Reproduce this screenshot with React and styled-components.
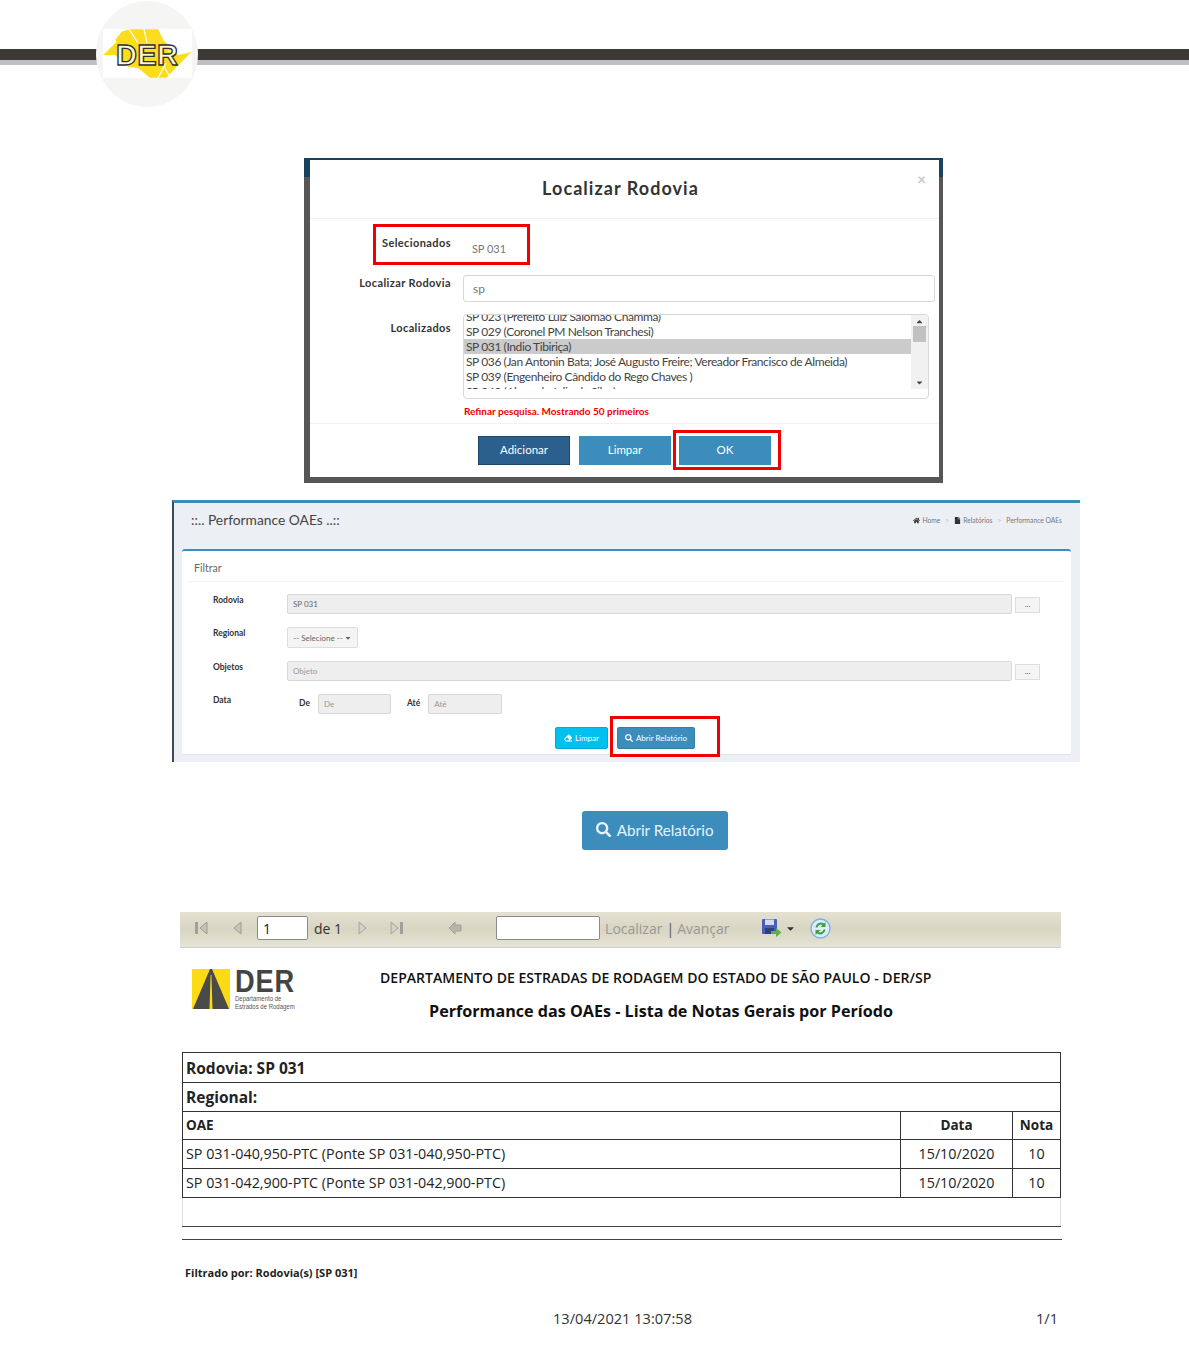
import React from "react";
import styled, { createGlobalStyle } from "styled-components";
import { FaHome, FaFile, FaEraser, FaSearch, FaCaretDown, FaCaretUp } from "react-icons/fa";

const Global = createGlobalStyle`
    html, body { margin: 0; padding: 0; background: #fff; }
    body { font-family: "Lato", "Liberation Sans", sans-serif; }
    * { box-sizing: border-box; }
`;

const Page = styled.div`
    width: 1189px;
    height: 1354px;
    overflow: hidden;
    display: flex;
    flex-direction: column;
    align-items: flex-start;
`;

/* top banner */
const Banner = styled.div`
    position: relative;
    width: 100%;
    height: 108px;
    padding-top: 49px;
    flex: none;
`;
const BarDark = styled.div`
    height: 11px;
    background: #3d3a36;
`;
const BarGrey = styled.div`
    height: 5px;
    background: #bfc0c2;
`;
const Seal = styled.svg`
    position: absolute;
    left: 96px;
    top: 1px;
`;

/* modal */
const ModalFrame = styled.div`
    margin: 50px 0 0 304px;
    width: 639px;
    height: 325px;
    padding: 2px 4px 6px 6px;
    flex: none;
    background: linear-gradient(#17435e 0, #17435e 19px, #565656 19px, #565656 100%);
`;
const Modal = styled.div`
    position: relative;
    height: 100%;
    background: #fff;
`;
const ModalHeader = styled.div`
    height: 59px;
    border-bottom: 1px solid #f2f2f2;
    display: flex;
    align-items: center;
    justify-content: center;
    padding: 0 8px 3px 0;
    font-size: 18px;
    font-weight: 700;
    letter-spacing: 1.05px;
    color: #333;
`;
const Close = styled.span`
    position: absolute;
    top: 10px;
    right: 13px;
    font-size: 15px;
    font-weight: 700;
    color: #c8c8c8;
`;
const RedBox = styled.div`
    border: 3px solid #f00000;
    flex: none;
`;
const SelectedBox = styled(RedBox)`
    margin: 5px 0 0 63px;
    width: 157px;
    height: 41px;
    display: flex;
    padding: 9px 0 0 6px;
`;
const SelLabel = styled.span`
    font-size: 11px;
    font-weight: 700;
    line-height: 14px;
    letter-spacing: 0.4px;
    color: #333;
`;
const SelValue = styled.span`
    margin: 6px 0 0 21px;
    font-size: 11px;
    line-height: 14px;
    color: #777;
`;
const ModalRow = styled.div`
    display: flex;
    margin-top: ${(p) => p.$top}px;
`;
const ModalLabel = styled.div`
    width: 141px;
    padding-top: ${(p) => p.$pad || 0}px;
    text-align: right;
    font-size: 11px;
    font-weight: 700;
    line-height: 14px;
    letter-spacing: 0.4px;
    color: #333;
`;
const SearchBox = styled.div`
    margin-left: 12px;
    width: 472px;
    height: 27px;
    border: 1px solid #d8d8d8;
    border-radius: 3px;
    padding: 0 9px;
    font-size: 12px;
    line-height: 26px;
    color: #777;
`;
const ListBox = styled.div`
    margin-left: 12px;
    width: 466px;
    height: 85px;
    border: 1px solid #d8d8d8;
    border-radius: 4px;
    display: flex;
    overflow: hidden;
`;
const ListItems = styled.div`
    flex: 1;
    height: 74px;
    overflow: hidden;
`;
const ListInner = styled.div`
    margin-top: -6px;
`;
const ListItem = styled.div`
    height: 15px;
    padding-left: 2px;
    font-size: 12px;
    line-height: 15px;
    white-space: nowrap;
    letter-spacing: -0.4px;
    color: #444;
    background: ${(p) => (p.$on ? "#cbcbcb" : "transparent")};
`;
const ScrollTrack = styled.div`
    width: 17px;
    height: 74px;
    background: #f1f1f1;
    display: flex;
    flex-direction: column;
    align-items: center;
    justify-content: space-between;
    font-size: 9px;
    color: #444;
    padding: 2px 0;
`;
const ScrollThumb = styled.div`
    width: 13px;
    height: 16px;
    margin-bottom: 36px;
    background: #c1c1c1;
`;
const Warn = styled.div`
    margin: 6px 0 0 154px;
    height: 12px;
    font-size: 10px;
    font-weight: 700;
    line-height: 12px;
    color: #f00000;
`;
const ModalFooter = styled.div`
    margin-top: 6px;
    border-top: 1px solid #f2f2f2;
    display: flex;
    align-items: flex-start;
    padding: 6px 0 0 168px;
`;
const ModalButton = styled.div`
    width: 92px;
    height: 29px;
    margin-top: 6px;
    margin-right: ${(p) => p.$gap || 0}px;
    background: ${(p) => p.$bg || "#3c8dbc"};
    border: 1px solid ${(p) => p.$line || "#3c8dbc"};
    color: #fff;
    font-size: 11.5px;
    line-height: 26px;
    text-align: center;
`;
const OkBox = styled(RedBox)`
    width: 108px;
    height: 40px;
    padding: 3px 0 0 3px;
`;
const OkButton = styled(ModalButton)`
    margin-top: 0;
`;

/* filter panel */
const Panel = styled.div`
    margin: 17px 0 0 172px;
    width: 908px;
    height: 262px;
    flex: none;
    background: #ecf0f5;
    border-top: 3px solid #3c8dbc;
    border-left: 2px solid #3b4a55;
    padding: 0 9px 0 8px;
`;
const PanelTop = styled.div`
    height: 46px;
    display: flex;
    justify-content: space-between;
    padding: 9px 9px 0 9px;
`;
const PanelTitle = styled.div`
    font-size: 13.8px;
    line-height: 16px;
    color: #444;
`;
const Crumbs = styled.div`
    display: flex;
    align-items: center;
    height: 16px;
    font-size: 6.7px;
    color: #777;
`;
const CrumbIcon = styled.span`
    display: inline-flex;
    margin-right: 2px;
    font-size: 7px;
    color: #333;
`;
const CrumbSep = styled.span`
    margin: 0 5px;
    color: #bbb;
`;
const Card = styled.div`
    height: 206px;
    background: #fff;
    border-top: 2px solid #3c8dbc;
    border-bottom: 1px solid #dfe3e8;
    border-radius: 3px 3px 0 0;
    padding: 0 6px;
`;
const CardHead = styled.div`
    height: 31px;
    border-bottom: 1px solid #f4f4f4;
    padding: 10px 0 0 6px;
    font-size: 10.5px;
    line-height: 14px;
    color: #666;
`;
const FilterRows = styled.div`
    padding: 12px 0 0 25px;
    display: flex;
    flex-direction: column;
    gap: 13px;
`;
const FilterRow = styled.div`
    display: flex;
    align-items: flex-start;
`;
const FilterLabel = styled.div`
    width: 74px;
    padding-top: 1px;
    font-size: 8.5px;
    font-weight: 700;
    line-height: 10px;
    color: #333;
`;
const Disabled = styled.div`
    width: ${(p) => p.$w}px;
    height: 20px;
    margin-left: ${(p) => p.$left || 0}px;
    background: #eee;
    border: 1px solid #d8d8d8;
    border-radius: 2px;
    padding-left: 5px;
    font-size: 8px;
    line-height: 18px;
    color: ${(p) => (p.$dark ? "#666" : "#999")};
`;
const DotsBtn = styled.div`
    width: 25px;
    height: 16px;
    margin: 3px 0 0 3px;
    background: #f4f4f4;
    border: 1px solid #ddd;
    font-size: 8px;
    line-height: 13px;
    text-align: center;
    color: #555;
`;
const SelectBtn = styled.div`
    width: 71px;
    height: 21px;
    background: #f4f4f4;
    border: 1px solid #ddd;
    border-radius: 2px;
    display: flex;
    align-items: center;
    justify-content: center;
    gap: 1px;
    font-size: 8px;
    color: #666;
`;
const DateLabel = styled.div`
    margin-left: ${(p) => p.$left}px;
    padding-top: 4px;
    font-size: 8.5px;
    font-weight: 700;
    line-height: 10px;
    color: #333;
`;
const ActionRow = styled.div`
    display: flex;
    align-items: flex-start;
    margin-top: -11px;
    padding-left: 342px;
`;
const SmallBtn = styled.div`
    width: ${(p) => p.$w}px;
    height: 22px;
    margin-top: ${(p) => p.$top || 0}px;
    background: ${(p) => p.$bg};
    border: 1px solid ${(p) => p.$line};
    border-radius: 2px;
    display: flex;
    align-items: center;
    justify-content: center;
    gap: 3px;
    font-size: 8px;
    color: #fff;
`;
const ActionBox = styled(RedBox)`
    margin-left: 2px;
    width: 110px;
    height: 41px;
    padding: 8px 0 0 4px;
`;

/* big button */
const BigButton = styled.div`
    margin: 49px 0 0 582px;
    width: 146px;
    height: 39px;
    flex: none;
    background: #3c8dbc;
    border-radius: 3px;
    display: flex;
    align-items: center;
    justify-content: center;
    gap: 5px;
    padding-bottom: 2px;
    font-size: 15.2px;
    color: #e8f2f8;
`;

/* report viewer */
const Toolbar = styled.div`
    margin: 62px 0 0 180px;
    width: 881px;
    height: 36px;
    flex: none;
    padding-bottom: 3px;
    background: linear-gradient(#e4e1d3, #d8d5c2 50%, #e6e4d6);
    border-bottom: 1px solid #d0d0d0;
    display: flex;
    align-items: center;
    font-family: "Open Sans", sans-serif;
    font-size: 14px;
    color: #333;
`;
const ToolIcon = styled.svg`
    flex: none;
    margin-left: ${(p) => p.$left || 0}px;
`;
const ToolInput = styled.div`
    width: ${(p) => p.$w}px;
    height: 24px;
    margin-left: ${(p) => p.$left}px;
    flex: none;
    background: #fff;
    border: 1px solid #8a8a8a;
    border-radius: 2px;
    padding-left: 5px;
    line-height: 23px;
    color: #222;
`;
const ToolText = styled.span`
    margin-left: ${(p) => p.$left}px;
    color: ${(p) => p.$color || "#333"};
    white-space: nowrap;
`;
const SaveCaret = styled(FaCaretDown)`
    flex: none;
    margin-left: 3px;
    font-size: 11px;
`;

const ReportTop = styled.div`
    position: relative;
    margin: 21px 0 0 192px;
    width: 869px;
    height: 83px;
    flex: none;
    font-family: "Open Sans", sans-serif;
`;
const LogoWrap = styled.div`
    display: flex;
    gap: 5px;
`;
const LogoWords = styled.div`
    display: flex;
    flex-direction: column;
    margin-top: -1px;
    font-family: "Liberation Sans", sans-serif;
    color: #555;
`;
const LogoBig = styled.div`
    font-size: 32px;
    font-weight: 700;
    line-height: 27px;
    letter-spacing: 1px;
    color: #444;
    transform: scaleX(0.85);
    transform-origin: left center;
`;
const LogoSmall = styled.div`
    font-size: 7.5px;
    line-height: 8px;
    white-space: nowrap;
    transform: scaleX(0.8);
    transform-origin: left center;
`;
const Org = styled.div`
    position: absolute;
    top: 0;
    left: 188px;
    font-size: 14.05px;
    font-weight: 600;
    line-height: 18px;
    color: #111;
    white-space: nowrap;
`;
const ReportTitle = styled.div`
    position: absolute;
    top: 32px;
    left: 237px;
    font-size: 16.15px;
    font-weight: 700;
    line-height: 21px;
    color: #111;
    white-space: nowrap;
`;

const Table = styled.table`
    margin-left: 182px;
    width: 879px;
    flex: none;
    table-layout: fixed;
    border-collapse: collapse;
    font-family: "Open Sans", sans-serif;
`;
const Row = styled.tr`
    height: ${(p) => p.$h}px;
`;
const Cell = styled.td`
    border: 1px solid #333;
    padding: ${(p) => (p.$big ? "0 3px" : "0 3px 1px")};
    font-size: ${(p) => (p.$big ? 15.5 : p.$bold ? 13.5 : 14.3)}px;
    font-weight: ${(p) => (p.$bold ? 700 : 400)};
    text-align: ${(p) => (p.$center ? "center" : "left")};
    color: #222;
    white-space: nowrap;
`;
const EmptyCell = styled.td`
    border-left: 1px solid #ddd;
    border-right: 1px solid #ddd;
    border-bottom: 1px solid #444;
`;
const Rule = styled.div`
    margin: 12px 0 0 182px;
    width: 880px;
    height: 1px;
    flex: none;
    background: #444;
`;
const Filtered = styled.div`
    margin: 26px 0 0 185px;
    height: 14px;
    flex: none;
    font-family: "Open Sans", sans-serif;
    font-size: 11px;
    font-weight: 700;
    line-height: 14px;
    color: #222;
`;
const FootRow = styled.div`
    margin: 29px 0 0 553px;
    width: 505px;
    flex: none;
    display: flex;
    justify-content: space-between;
    font-family: "Open Sans", sans-serif;
    font-size: 14.6px;
    line-height: 18px;
    color: #333;
`;

const roads = [
    { t: "SP 023 (Prefeito Luiz Salomão Chamma)" },
    { t: "SP 029 (Coronel PM Nelson Tranchesi)" },
    { t: "SP 031 (Indio Tibiriça)", on: true },
    { t: "SP 036 (Jan Antonin Bata; José Augusto Freire; Vereador Francisco de Almeida)" },
    { t: "SP 039 (Engenheiro Cândido do Rego Chaves )" },
    { t: "SP 040 (Alameda Julio da Silva)" },
];

const DerSeal = () => (
    <Seal width="102" height="106" viewBox="0 0 102 106">
        <ellipse cx="51" cy="53" rx="51" ry="53" fill="#f5f5f4" />
        <rect x="7" y="28" width="89" height="49" fill="#fff" />
        <polygon
            points="7.3,54 20.7,40.7 19,39 25.7,30.7 33.3,28.3 62.3,28.3 67.3,39 82.3,54 95.7,50.7 80.7,65.7 70.7,76.7 54,76.7 42.3,67.3 32.3,65.7 19,54"
            fill="#fbdc1e"
        />
        <g stroke="#fff" strokeWidth="1.2">
            <line x1="33" y1="28" x2="42" y2="42" />
            <line x1="48" y1="28" x2="51" y2="42" />
            <line x1="72" y1="50" x2="92" y2="52" />
            <line x1="70" y1="62" x2="62" y2="77" />
            <line x1="66" y1="62" x2="74" y2="76" />
        </g>
        <text
            x="20"
            y="64"
            fontFamily="Liberation Sans, sans-serif"
            fontSize="29"
            fontWeight="700"
            fill="#fff"
            fillOpacity="0.8"
            stroke="#2f2f2f"
            strokeWidth="1.3"
            textLength="62"
        >
            DER
        </text>
    </Seal>
);

const TriIcon = ({ dir, bar, left }) => (
    <ToolIcon $left={left} width="16" height="16" viewBox="0 0 16 16">
        {dir === "left" ? (
            <polygon points={bar ? "14,2 14,14 7,8" : "10,2 10,14 3,8"} fill="#c4c4bc" stroke="#9c9c94" />
        ) : (
            <polygon points="2,2 2,14 9,8" fill="#d2d2ca" stroke="#a4a49c" />
        )}
        {bar && <rect x={dir === "left" ? 2 : 11} y="2" width="3" height="12" fill="#a0a098" />}
    </ToolIcon>
);

const BackIcon = ({ left }) => (
    <ToolIcon $left={left} width="14" height="16" viewBox="0 0 14 16">
        <path d="M7 2 L1 8 L7 14 V11 H13 V5 H7 Z" fill="#b5b5ac" stroke="#a2a29a" />
    </ToolIcon>
);

const SaveIcon = ({ left }) => (
    <ToolIcon $left={left} width="21" height="20" viewBox="0 0 21 20">
        <rect x="1" y="1" width="15" height="15" rx="1" fill="#4a5fb5" />
        <rect x="4" y="1.5" width="9" height="5.5" fill="#d5dcf2" />
        <rect x="4" y="10" width="9" height="6" fill="#2e3d85" />
        <path d="M10 13 H15 V10 L20.5 14.5 L15 19 V16 H10 Z" fill="#5bb04a" />
    </ToolIcon>
);

const RefreshIcon = ({ left }) => (
    <ToolIcon $left={left} width="21" height="21" viewBox="0 0 21 21">
        <circle cx="10.5" cy="10.5" r="9.5" fill="#dcecf8" stroke="#7fb2dc" strokeWidth="1.4" />
        <path d="M5.5 9.5 A5.5 5.5 0 0 1 14 5.5 L15.5 4 V9 H10.5 L12.5 7 A3.5 3.5 0 0 0 7.5 9.5 Z" fill="#3fa23f" />
        <path d="M15.5 11.5 A5.5 5.5 0 0 1 7 15.5 L5.5 17 V12 H10.5 L8.5 14 A3.5 3.5 0 0 0 13.5 11.5 Z" fill="#3fa23f" />
    </ToolIcon>
);

const RoadLogo = () => (
    <svg width="38" height="40" viewBox="0 0 38 40">
        <rect width="38" height="40" fill="#fddb14" />
        <polygon points="18,0 20,0 37,40 1,40" fill="#4a4a4a" />
        <polygon points="18.6,6 19.4,6 20.5,40 17.5,40" fill="#fddb14" />
    </svg>
);

export default function App() {
    return (
        <Page>
            <Global />
            <Banner>
                <BarDark />
                <BarGrey />
                <DerSeal />
            </Banner>

            <ModalFrame>
                <Modal>
                    <ModalHeader>Localizar Rodovia</ModalHeader>
                    <Close>×</Close>
                    <SelectedBox>
                        <SelLabel>Selecionados</SelLabel>
                        <SelValue>SP 031</SelValue>
                    </SelectedBox>
                    <ModalRow $top={10}>
                        <ModalLabel $pad={1}>Localizar Rodovia</ModalLabel>
                        <SearchBox>sp</SearchBox>
                    </ModalRow>
                    <ModalRow $top={12}>
                        <ModalLabel $pad={7}>Localizados</ModalLabel>
                        <ListBox>
                            <ListItems>
                                <ListInner>
                                    {roads.map((r) => (
                                        <ListItem key={r.t} $on={r.on}>{r.t}</ListItem>
                                    ))}
                                </ListInner>
                            </ListItems>
                            <ScrollTrack>
                                <FaCaretUp />
                                <ScrollThumb />
                                <FaCaretDown />
                            </ScrollTrack>
                        </ListBox>
                    </ModalRow>
                    <Warn>Refinar pesquisa. Mostrando 50 primeiros</Warn>
                    <ModalFooter>
                        <ModalButton $bg="#2b5f8e" $line="#1d4464" $gap={9}>Adicionar</ModalButton>
                        <ModalButton $gap={2}>Limpar</ModalButton>
                        <OkBox>
                            <OkButton>OK</OkButton>
                        </OkBox>
                    </ModalFooter>
                </Modal>
            </ModalFrame>

            <Panel>
                <PanelTop>
                    <PanelTitle>::.. Performance OAEs ..::</PanelTitle>
                    <Crumbs>
                        <CrumbIcon><FaHome /></CrumbIcon>Home
                        <CrumbSep>&gt;</CrumbSep>
                        <CrumbIcon><FaFile /></CrumbIcon>Relatórios
                        <CrumbSep>&gt;</CrumbSep>
                        Performance OAEs
                    </Crumbs>
                </PanelTop>
                <Card>
                    <CardHead>Filtrar</CardHead>
                    <FilterRows>
                        <FilterRow>
                            <FilterLabel>Rodovia</FilterLabel>
                            <Disabled $w={725} $dark>SP 031</Disabled>
                            <DotsBtn>...</DotsBtn>
                        </FilterRow>
                        <FilterRow>
                            <FilterLabel>Regional</FilterLabel>
                            <SelectBtn>-- Selecione -- <FaCaretDown /></SelectBtn>
                        </FilterRow>
                        <FilterRow>
                            <FilterLabel>Objetos</FilterLabel>
                            <Disabled $w={725}>Objeto</Disabled>
                            <DotsBtn>...</DotsBtn>
                        </FilterRow>
                        <FilterRow>
                            <FilterLabel>Data</FilterLabel>
                            <DateLabel $left={12}>De</DateLabel>
                            <Disabled $w={73} $left={8}>De</Disabled>
                            <DateLabel $left={16}>Até</DateLabel>
                            <Disabled $w={74} $left={8}>Até</Disabled>
                        </FilterRow>
                        <ActionRow>
                            <SmallBtn $w={53} $top={11} $bg="#00c0ef" $line="#00acd6">
                                <FaEraser /> Limpar
                            </SmallBtn>
                            <ActionBox>
                                <SmallBtn $w={78} $bg="#3c8dbc" $line="#367fa9">
                                    <FaSearch /> Abrir Relatório
                                </SmallBtn>
                            </ActionBox>
                        </ActionRow>
                    </FilterRows>
                </Card>
            </Panel>

            <BigButton>
                <FaSearch /> Abrir Relatório
            </BigButton>

            <Toolbar>
                <TriIcon dir="left" bar left={13} />
                <TriIcon dir="left" left={22} />
                <ToolInput $w={51} $left={10}>1</ToolInput>
                <ToolText $left={6}>de 1</ToolText>
                <TriIcon dir="right" left={15} />
                <TriIcon dir="right" bar left={16} />
                <BackIcon left={43} />
                <ToolInput $w={104} $left={34} />
                <ToolText $left={5} $color="#999">Localizar</ToolText>
                <ToolText $left={4} $color="#555">|</ToolText>
                <ToolText $left={3} $color="#999">Avançar</ToolText>
                <SaveIcon left={31} />
                <SaveCaret />
                <RefreshIcon left={14} />
            </Toolbar>

            <ReportTop>
                <LogoWrap>
                    <RoadLogo />
                    <LogoWords>
                        <LogoBig>DER</LogoBig>
                        <LogoSmall>Departamento de</LogoSmall>
                        <LogoSmall>Estrados de Rodagem</LogoSmall>
                    </LogoWords>
                </LogoWrap>
                <Org>DEPARTAMENTO DE ESTRADAS DE RODAGEM DO ESTADO DE SÃO PAULO - DER/SP</Org>
                <ReportTitle>Performance das OAEs - Lista de Notas Gerais por Período</ReportTitle>
            </ReportTop>

            <Table>
                <colgroup>
                    <col />
                    <col width="112" />
                    <col width="48" />
                </colgroup>
                <tbody>
                    <Row $h={30}><Cell colSpan={3} $bold $big>Rodovia: SP 031</Cell></Row>
                    <Row $h={29}><Cell colSpan={3} $bold $big>Regional:</Cell></Row>
                    <Row $h={28}>
                        <Cell $bold>OAE</Cell>
                        <Cell $bold $center>Data</Cell>
                        <Cell $bold $center>Nota</Cell>
                    </Row>
                    <Row $h={29}>
                        <Cell>SP 031-040,950-PTC (Ponte SP 031-040,950-PTC)</Cell>
                        <Cell $center>15/10/2020</Cell>
                        <Cell $center>10</Cell>
                    </Row>
                    <Row $h={29}>
                        <Cell>SP 031-042,900-PTC (Ponte SP 031-042,900-PTC)</Cell>
                        <Cell $center>15/10/2020</Cell>
                        <Cell $center>10</Cell>
                    </Row>
                    <Row $h={29}><EmptyCell colSpan={3} /></Row>
                </tbody>
            </Table>
            <Rule />
            <Filtered>Filtrado por: Rodovia(s) [SP 031]</Filtered>
            <FootRow>
                <span>13/04/2021 13:07:58</span>
                <span>1/1</span>
            </FootRow>
        </Page>
    );
}
